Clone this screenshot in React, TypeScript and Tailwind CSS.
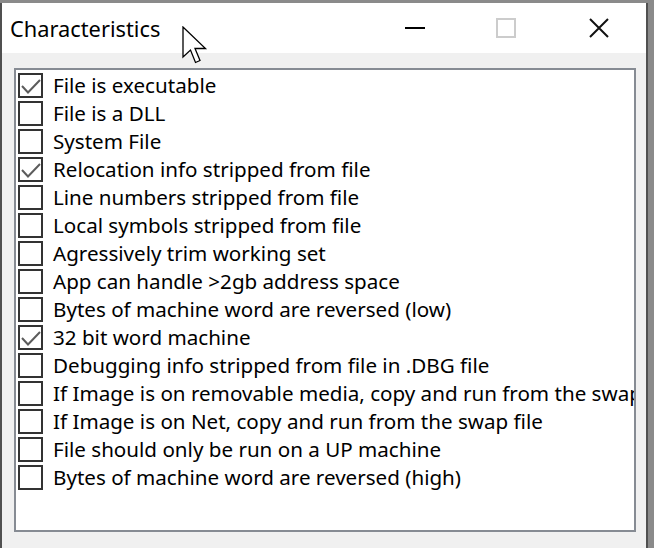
import { useState } from 'react';

type Flag = {
  label: string;
  checked: boolean;
};

const flags: Flag[] = [
  { label: 'File is executable', checked: true },
  { label: 'File is a DLL', checked: false },
  { label: 'System File', checked: false },
  { label: 'Relocation info stripped from file', checked: true },
  { label: 'Line numbers stripped from file', checked: false },
  { label: 'Local symbols stripped from file', checked: false },
  { label: 'Agressively trim working set', checked: false },
  { label: 'App can handle >2gb address space', checked: false },
  { label: 'Bytes of machine word are reversed (low)', checked: false },
  { label: '32 bit word machine', checked: true },
  { label: 'Debugging info stripped from file in .DBG file', checked: false },
  { label: 'If Image is on removable media, copy and run from the swap file', checked: false },
  { label: 'If Image is on Net, copy and run from the swap file', checked: false },
  { label: 'File should only be run on a UP machine', checked: false },
  { label: 'Bytes of machine word are reversed (high)', checked: false },
];

function CheckRow({ flag }: { flag: Flag }) {
  return (
    <div className="flex h-[28px] items-center gap-[10px] pl-[2px] whitespace-nowrap">
      <span className="relative h-[25px] w-[25px] shrink-0 border-2 border-[#333333] bg-white">
        {flag.checked && (
          <svg className="absolute -left-[2px] -top-[2px]" width="25" height="25" viewBox="0 0 25 25">
            <path d="M4 13 L10 19.5 L22 7" fill="none" stroke="#5c5c5c" strokeWidth="2" />
          </svg>
        )}
      </span>
      <span className="pt-[1px] text-[20.6px] leading-none text-black">{flag.label}</span>
    </div>
  );
}

function Cursor() {
  return (
    <svg className="absolute left-[182px] top-[26px]" width="28" height="40" viewBox="0 0 28 40">
      <path
        d="M1 1 L1 31 L8.5 24 L13.5 36.5 L18 34.5 L13 22.5 L23.5 22.5 Z"
        fill="white"
        stroke="black"
        strokeWidth="1.3"
        strokeLinejoin="miter"
      />
    </svg>
  );
}

export default function App() {
  const [items] = useState(flags);

  return (
    <div className="relative h-[548px] w-[654px] overflow-hidden bg-[#8a8a8a] pt-[3px] font-['Noto_Sans',sans-serif]">
      <div className="flex h-[545px] w-[648px] flex-col border-x-2 border-[#505050] bg-[#f0f0f0]">
        <div className="flex h-[50px] shrink-0 items-center bg-white">
          <span className="pl-[8px] pt-[3px] text-[21.8px] text-black">Characteristics</span>
          <div className="ml-auto flex h-full items-center">
            <span className="mr-[71px] h-[2px] w-[20px] bg-black" />
            <span className="mr-[73px] h-[20px] w-[20px] border-2 border-[#cccccc]" />
            <svg className="mr-[37px]" width="20" height="20" viewBox="0 0 20 20">
              <path d="M1 1 L19 19 M19 1 L1 19" stroke="#111" strokeWidth="2" />
            </svg>
          </div>
        </div>
        <div className="ml-[12px] mr-[10px] mt-[15px] h-[464px] overflow-hidden border-2 border-[#868b93] bg-white pt-[1px]">
          {items.map((flag) => (
            <CheckRow key={flag.label} flag={flag} />
          ))}
        </div>
      </div>
      <Cursor />
    </div>
  );
}
